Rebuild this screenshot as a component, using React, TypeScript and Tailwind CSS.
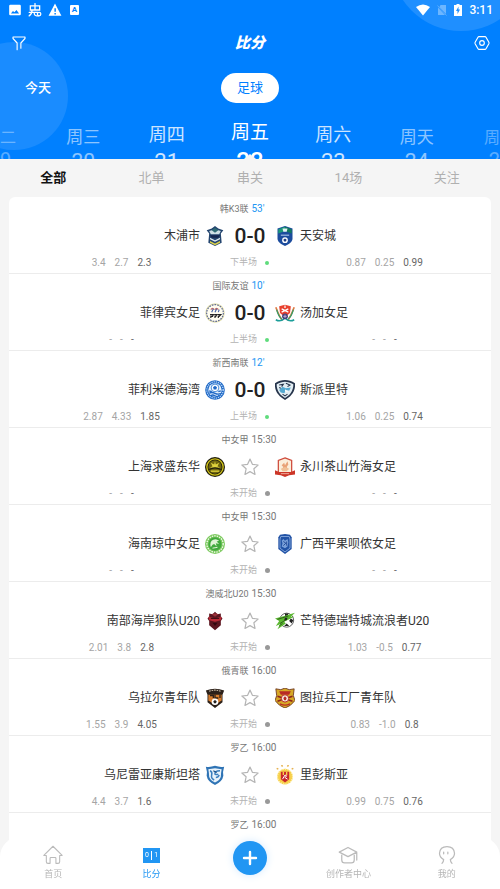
import type { ReactNode } from 'react';

type Match = {
  league: string;
  time: string;
  live?: string;
  home: string;
  away: string;
  homeLogo: ReactNode;
  awayLogo: ReactNode;
  homeOdds?: string[];
  awayOdds?: string[];
};

const shield = 'M12 1 L21 4 V13 C21 18 17 21 12 23 C7 21 3 18 3 13 V4 Z';

const MokpoLogo = (
  <>
    <path d="M12 0 L16 3 L22 5 L19 9 L20 20 L12 24 L4 20 L5 9 L2 5 L8 3 Z" fill="#24456f" />
    <path d="M5 6 L12 4 L19 6 L17 10 H7 Z" fill="#cfe0e6" />
    <path d="M8 5 L12 2 L16 5 L12 8 Z" fill="#2f6b74" />
    <path d="M6 11 H18 L16 14 H8 Z" fill="#15264f" />
    <path d="M6 14 L12 17 L18 14 V16 L12 19 L6 16 Z" fill="#dfe9ef" />
    <path d="M6 18 L12 21 L18 18 V20 L12 23 L6 20 Z" fill="#dbd04b" />
  </>
);

const CheonanLogo = (
  <>
    <path d="M12 0 L21 3 V15 C21 19 17 22 12 24 C7 22 3 19 3 15 V3 Z" fill="#1c4c9d" />
    <path d="M12 1 L4 4 V9 L12 6 Z" fill="#1b9a77" />
    <path d="M12 1 L20 4 V9 L12 6 Z" fill="#13795e" />
    <path d="M9 3 H15 L14 7 H10 Z" fill="#e3f3f4" />
    <path d="M7 11 H17" stroke="#b9d0f1" strokeWidth="1.2" />
    <circle cx="12" cy="17" r="3.4" fill="#fff" />
    <path d="M12 15 L14 16.5 L13 18.7 H11 L10 16.5 Z" fill="#1c3b80" />
  </>
);

const PhilippinesLogo = (
  <>
    <circle cx="12" cy="12" r="11" fill="#fffdf0" stroke="#e3dfae" strokeWidth="1.4" />
    <circle cx="12" cy="12" r="10" fill="none" stroke="#5a6592" strokeWidth="1.4" strokeDasharray="2 1.3" />
    <path d="M7 8 Q9 5 11 8 M12 8 Q14 5 16 8" stroke="#c46a69" strokeWidth="1.6" fill="none" />
    <path d="M8 11 L10 7 M12 11 L14 7 M16 11 L17 8" stroke="#4966a9" strokeWidth="1.4" />
    <path d="M6 14 H10 L9 16 H7 V18 M11 14 H14 L13 16 H12 V18 M15 14 H19 L17 16 H16 V18" stroke="#222" strokeWidth="1.4" fill="none" />
  </>
);

const TongaLogo = (
  <>
    <path d="M1 5 Q5 16 9 21 M23 5 Q19 16 15 21" stroke="#e17a42" strokeWidth="2" fill="none" />
    <path d="M2 8 Q4 16 8 19 M22 8 Q20 16 16 19" stroke="#2f9e6a" strokeWidth="1.5" fill="none" />
    <path d="M1 20 Q6 23 11 19 M23 20 Q18 23 13 19" stroke="#1b9e9a" strokeWidth="2" fill="none" />
    <path d="M5 4 L12 2 L19 4 L18 12 L12 17 L6 12 Z" fill="#e8412f" />
    <path d="M8 7 L16 11 M16 7 L8 11 M12 3 V6" stroke="#fff" strokeWidth="1.5" fill="none" />
    <circle cx="12" cy="16" r="3.5" fill="#42427b" />
    <path d="M10 16 H14 M12 14 V18" stroke="#d1b9da" strokeWidth="1" />
  </>
);

const FelipeLogo = (
  <>
    <circle cx="12" cy="12" r="11.8" fill="#1f68c6" />
    <circle cx="12" cy="12" r="9.8" fill="none" stroke="#b9d9f8" strokeWidth="1.6" strokeDasharray="1.4 1.2" />
    <circle cx="12" cy="12" r="8" fill="#e6f1fc" />
    <circle cx="12" cy="9.5" r="4.6" fill="#fff" stroke="#2a78d3" strokeWidth="1" />
    <path d="M12 7 L14.4 8.800 L13.5 11.4 H10.5 L9.6 8.800 Z" fill="#1f68c6" />
    <path d="M5 13 L8 14 M19 13 L16 14 M5 16 Q8 14 12 16 T19 16 M7 19 Q9 17 12 19 T17 18" stroke="#1f68c6" strokeWidth="1.5" fill="none" />
  </>
);

const SpiritLogo = (
  <>
    <path d="M12 0 C16 0 20 1 24 4 C25 14 19 20 12 24 C5 20 -1 14 0 4 C4 1 8 0 12 0 Z" fill="#26344b" />
    <path d="M12 2 C15 2 19 3 22 5 C22 13 18 18 12 21.5 C6 18 2 13 2 5 C5 3 9 2 12 2 Z" fill="#e2edf3" />
    <path d="M5 12 L9 8 L13 10 L19 9 L17 13 L14 12 L11 16 L7 15 Z" fill="#54a8d0" />
    <path d="M5 6 L10 5 L8 8 M13 4 L18 6 L15 8 M9 17 L12 19 L15 17 M5 9 L7 10" stroke="#26344b" strokeWidth="1.3" fill="none" />
    <path d="M12 11 L16 14 L12 14 Z" fill="#fff" />
  </>
);

const ShanghaiLogo = (
  <>
    <circle cx="12" cy="12" r="12" fill="#1f1d0c" />
    <circle cx="12" cy="12" r="9.8" fill="none" stroke="#d0c218" strokeWidth="1.6" />
    <circle cx="12" cy="12" r="8" fill="#6f6610" />
    <path d="M12 5 L13 9 L17 7 L15 11 L18 13 H6 L9 11 L7 7 L11 9 Z" fill="#e0d33d" />
    <path d="M5 15 Q12 11 19 15" stroke="#1f1d0c" strokeWidth="1.5" fill="none" />
    <path d="M7 17 H17" stroke="#e0d33d" strokeWidth="1.6" />
  </>
);

const YongchuanLogo = (
  <>
    <path d="M12 1 L20 4 V19 H4 V4 Z" fill="#fbeeda" stroke="#cf4b3c" strokeWidth="1.5" />
    <path d="M8 10 L11 7 L12 10 L15 5 L16 9 L14 12 L16 15 H8 L10 12 Z" fill="#e9a276" />
    <path d="M7 14 L12 12 L17 14 L14 17 H9 Z" fill="#f0c096" />
    <path d="M0 16 L5 18 H19 L24 16 V21 L17 22 L12 24 L7 22 L0 21 Z" fill="#cc3527" />
    <path d="M7 20 H17" stroke="#f3c1b3" strokeWidth="1" />
  </>
);

const HainanLogo = (
  <>
    <circle cx="12" cy="12" r="12" fill="#7fcb62" />
    <circle cx="12" cy="12" r="9.8" fill="none" stroke="#fff" strokeWidth="1.4" strokeDasharray="1.6 1.4" />
    <circle cx="12" cy="12" r="8" fill="#41a93d" />
    <path d="M7 16 Q5 9 10 7 Q13 5 17 8 L14 9 L17 12 L13 11 L14 15 L11 12 L9 13 Z" fill="#dff3d5" />
    <path d="M9 10 L12 8 M9 17 L15 16" stroke="#dff3d5" strokeWidth="1.2" />
  </>
);

const GuangxiLogo = (
  <>
    <path d="M6 1 L12 0 L18 1 L20 4 V18 L12 24 L4 18 V4 Z" fill="#2152a5" />
    <path d="M7 3 H17 L18 6 V17 L12 21.5 L6 17 V6 Z" fill="none" stroke="#8eafe0" strokeWidth="1" />
    <path d="M8 8 L10 6 L12 8 L15 6 L16 10 L15 15 L12 17 L8 15 L9 11 Z" fill="#7aa0d9" />
    <path d="M10 9 L13 11 L10 14 M14 9 V14" stroke="#173f8b" strokeWidth="1" fill="none" />
  </>
);

const SouthCoastLogo = (
  <>
    <path d="M12 1 L15 4 L19 3 V7 L21 9 L19 12 V17 L12 23 L5 17 V12 L3 9 L5 7 V3 L9 4 Z" fill="#5b1620" />
    <path d="M4 7 L12 9 L20 7 L19 11 L12 13 L5 11 Z" fill="#bb2a36" />
    <path d="M8 4 L12 7 L16 4 L14 3 H10 Z" fill="#9a2f38" />
    <path d="M9 14 L12 18 L15 14 Z" fill="#32080f" />
    <path d="M7 9 H17" stroke="#2a070c" strokeWidth="1" />
  </>
);

const MontLogo = (
  <>
    <circle cx="14" cy="11" r="8.4" fill="#fff" stroke="#444" strokeWidth="1" />
    <path d="M12 3 H16 L15 6 H12 Z M19 9 L22 11 L20 15 L17 12 Z M11 18 L14 15 L17 18 Z" fill="#222" />
    <path d="M0 9 L11 6 L24 2 L19 7 L23 7 L11 13 L13 15 L3 22 L6 16 L1 18 L5 12 Z" fill="#5cb832" />
    <path d="M3 10 L16 6 M6 15 L14 10 M5 18 L9 15" stroke="#2b5c16" strokeWidth="1.1" />
    <path d="M12 8 L15 8 L14 11 L11 11 Z" fill="#222" />
  </>
);

const UralLogo = (
  <>
    <path d="M1 3 Q12 -1 23 3 L21 8 V17 L12 24 L3 17 V8 Z" fill="#2b2019" />
    <path d="M4 8 H20 V15 L12 20 L4 15 Z" fill="#d67d2d" />
    <path d="M5 4 Q12 1 19 4" stroke="#c8b8a4" strokeWidth="1.3" fill="none" strokeDasharray="2 1" />
    <path d="M6 9 H10 V12 M12 8 V12 H16 M18 8 V12" stroke="#2b2019" strokeWidth="1.6" fill="none" />
    <circle cx="12" cy="16.5" r="4" fill="#fff" />
    <path d="M12 14.4 L14 16 L13.2 18.4 H10.8 L10 16 Z" fill="#222" />
  </>
);

const ArsenalTulaLogo = (
  <>
    <path d="M1 1 L7 2 L12 0 L17 2 L23 1 L22 9 L24 15 Q19 22 12 24 Q5 22 0 15 L2 9 Z" fill="#d6a826" stroke="#68301e" strokeWidth="1" />
    <path d="M5 4 H19 L17 8 H7 Z" fill="#b82a23" />
    <path d="M3 10 L21 16 M21 10 L3 16" stroke="#8c231d" strokeWidth="2" />
    <circle cx="12" cy="12.5" r="4.4" fill="#f5ece1" stroke="#b82a23" strokeWidth="1.2" />
    <path d="M12 10 L14 12 L13 14.6 H11 L10 12 Z" fill="#b82a23" />
    <path d="M6 19 Q12 22 18 19" stroke="#b82a23" strokeWidth="1.6" fill="none" />
  </>
);

const UnireaLogo = (
  <>
    <path d="M1 2 Q6 3 12 1 Q18 3 23 2 Q21 8 22 13 Q21 20 12 24 Q3 20 2 13 Q3 8 1 2 Z" fill="#2f74b5" />
    <path d="M4 5 Q8 5 12 4 Q16 5 20 5 Q19 10 19 14 Q18 18 12 21 Q6 18 5 14 Q5 10 4 5 Z" fill="#e9f3fb" />
    <path d="M6 7 Q9 8 8 12 Q7 16 11 18 M18 7 Q11 7 12 11 Q14 12 16 11 M13 15 Q16 15 17 12" stroke="#3a7fbf" strokeWidth="1.8" fill="none" />
    <path d="M10 7 L14 9" stroke="#16497e" strokeWidth="1.4" />
  </>
);

const RipensiaLogo = (
  <>
    <path d="M2 4 L4 5 M8 0 L9 2 M16 0 L15 2 M22 4 L20 5" stroke="#e6b14e" strokeWidth="1.8" />
    <circle cx="12" cy="14" r="9.4" fill="#f7d04b" />
    <circle cx="12" cy="14" r="9" fill="none" stroke="#fff1b5" strokeWidth="1.4" strokeDasharray="1.6 1.4" />
    <path d="M7 8 H17 V17 L12 21 L7 17 Z" fill="#c9272b" />
    <path d="M10 8 V12 M14 8 V12" stroke="#f7d04b" strokeWidth="1.6" />
    <path d="M9 17 L12 12 L14 13 L12 15 L15 17" stroke="#fff" strokeWidth="1.2" fill="none" />
  </>
);

const matches: Match[] = [
  { league: '韩K3联', time: "53'", live: '下半场', home: '木浦市', away: '天安城', homeLogo: MokpoLogo, awayLogo: CheonanLogo, homeOdds: ['3.4', '2.7', '2.3'], awayOdds: ['0.87', '0.25', '0.99'] },
  { league: '国际友谊', time: "10'", live: '上半场', home: '菲律宾女足', away: '汤加女足', homeLogo: PhilippinesLogo, awayLogo: TongaLogo },
  { league: '新西南联', time: "12'", live: '上半场', home: '菲利米德海湾', away: '斯派里特', homeLogo: FelipeLogo, awayLogo: SpiritLogo, homeOdds: ['2.87', '4.33', '1.85'], awayOdds: ['1.06', '0.25', '0.74'] },
  { league: '中女甲', time: '15:30', home: '上海求盛东华', away: '永川茶山竹海女足', homeLogo: ShanghaiLogo, awayLogo: YongchuanLogo },
  { league: '中女甲', time: '15:30', home: '海南琼中女足', away: '广西平果呗侬女足', homeLogo: HainanLogo, awayLogo: GuangxiLogo },
  { league: '澳威北U20', time: '15:30', home: '南部海岸狼队U20', away: '芒特德瑞特城流浪者U20', homeLogo: SouthCoastLogo, awayLogo: MontLogo, homeOdds: ['2.01', '3.8', '2.8'], awayOdds: ['1.03', '-0.5', '0.77'] },
  { league: '俄青联', time: '16:00', home: '乌拉尔青年队', away: '图拉兵工厂青年队', homeLogo: UralLogo, awayLogo: ArsenalTulaLogo, homeOdds: ['1.55', '3.9', '4.05'], awayOdds: ['0.83', '-1.0', '0.8'] },
  { league: '罗乙', time: '16:00', home: '乌尼雷亚康斯坦塔', away: '里彭斯亚', homeLogo: UnireaLogo, awayLogo: RipensiaLogo, homeOdds: ['4.4', '3.7', '1.6'], awayOdds: ['0.99', '0.75', '0.76'] },
  { league: '罗乙', time: '16:00', home: '', away: '', homeLogo: <path d={shield} fill="#c9272b" />, awayLogo: <path d={shield} fill="#2f74b5" /> },
];

// items shrink and fade towards both ends of the wheel
const days = [
  { name: '周二', date: '19', style: 'opacity-35 text-base pt-[5px]', dateStyle: 'text-xl leading-[18px]' },
  { name: '周三', date: '20', style: 'opacity-55 text-[17px] pt-1', dateStyle: 'text-[21px] leading-[22px]' },
  { name: '周四', date: '21', style: 'opacity-80 text-lg pt-[2px]', dateStyle: 'text-[22px] leading-7' },
  { name: '周五', date: '22', style: 'text-[19px]', dateStyle: 'text-2xl leading-[30px] font-medium' },
  { name: '周六', date: '23', style: 'opacity-80 text-lg pt-[2px]', dateStyle: 'text-[22px] leading-7' },
  { name: '周天', date: '24', style: 'opacity-55 text-[17px] pt-1', dateStyle: 'text-[21px] leading-[22px]' },
  { name: '周一', date: '25', style: 'opacity-35 text-base pt-[5px]', dateStyle: 'text-xl leading-[18px]' },
];

const tabs = ['全部', '北单', '串关', '14场', '关注'];

function Crest({ children }: { children: ReactNode }) {
  return (
    <svg className="w-5 h-5 shrink-0" viewBox="0 0 24 24" aria-hidden="true">
      {children}
    </svg>
  );
}

function Odds({ values, className }: { values?: string[]; className: string }) {
  const items = values ?? ['-', '-', '-'];
  return (
    <div className={`flex justify-center text-[10px] text-[#a5a5a5] ${values ? 'gap-[9px]' : 'gap-2'} ${className}`}>
      {items.map((v, i) => (
        <span key={i} className={i === 2 ? 'text-[#666]' : ''}>{v}</span>
      ))}
    </div>
  );
}

function MatchRow({ match }: { match: Match }) {
  return (
    <li className="h-[77px] shrink-0 border-b border-[#ececec] pt-[3px]">
      <div className="grid grid-cols-2 items-baseline gap-[3px] h-[17px] leading-[17px] text-[9px] text-[#777]">
        <span className="text-right">{match.league}</span>
        <span className={`text-[10px] ${match.live ? 'text-[#2196f3]' : ''}`}>{match.time}</span>
      </div>

      <div className="grid grid-cols-[1fr_50px_1fr] items-center h-[38px] text-xs text-[#333] whitespace-nowrap">
        <div className="flex items-center justify-end gap-[5px]">
          <span>{match.home}</span>
          <Crest>{match.homeLogo}</Crest>
        </div>
        {match.live ? (
          <span className="text-center text-[21px] font-medium text-[#222]">0-0</span>
        ) : (
          <button type="button" aria-label="关注" className="flex justify-center">
            <svg className="w-[18px] h-[18px]" viewBox="0 0 24 24" fill="none" stroke="#b5b5b5" strokeWidth="1.6" strokeLinejoin="round">
              <path d="M12 1.5 L15.2 8.4 L22.8 9.3 L17.2 14.4 L18.7 21.9 L12 18.2 L5.3 21.9 L6.8 14.4 L1.2 9.3 L8.8 8.4 Z" />
            </svg>
          </button>
        )}
        <div className="flex items-center gap-[5px]">
          <Crest>{match.awayLogo}</Crest>
          <span>{match.away}</span>
        </div>
      </div>

      <div className="grid grid-cols-[1fr_40px_1fr] items-center h-[14px]">
        <Odds values={match.homeOdds} className="pl-1" />
        <div className="flex items-center justify-between text-[9px] text-[#b3b3b3]">
          <span>{match.live ?? '未开始'}</span>
          <span className="flex justify-center w-[6px]">
            <span className={match.live ? 'w-1 h-1 rounded-full bg-[#5fdc7c]' : 'w-[5px] h-[5px] rounded-full bg-[#999]'} />
          </span>
        </div>
        <Odds values={match.awayOdds} className="pl-2" />
      </div>
    </li>
  );
}

function StatusBar() {
  return (
    <div className="flex items-center justify-between h-5 pl-2 pr-[7px]">
      <div className="flex items-center gap-[6px]">
        <svg className="w-[14px] h-[14px]" viewBox="0 0 24 24" fill="#fff">
          <path fillRule="evenodd" d="M4 3 H20 Q22 3 22 5 V19 Q22 21 20 21 H4 Q2 21 2 19 V5 Q2 3 4 3 Z M5 18 H19 L14.5 12 L11 16 L8.5 13.5 Z" />
        </svg>
        <svg className="w-[14px] h-[14px]" viewBox="0 0 24 24" fill="none" stroke="#fff" strokeWidth="2.2" strokeLinecap="round">
          <path d="M4 5 H20 V12 H4 Z M12 1 V12 M2 16 H17 M7 12 Q7 19 2 22 M11 16 Q10 22 15 22 H18" />
          <circle cx="19" cy="19" r="3" />
        </svg>
        <svg className="w-[14px] h-[14px]" viewBox="0 0 24 24" fill="#fff">
          <path fillRule="evenodd" d="M12 1 L23 22 H1 Z M11 9 V15 H13.5 V9 Z M11 17 V19.5 H13.5 V17 Z" />
        </svg>
        <span className="flex items-center justify-center w-[9px] h-[10px] ml-[2px] rounded-[1px] bg-white text-[8px] font-bold text-[#0080ff]">A</span>
      </div>
      <div className="flex items-center gap-[7px] text-white">
        <svg className="w-[14px] h-3" viewBox="0 0 28 24" fill="#fff">
          <path d="M14 23 L0 6 Q14 -4 28 6 Z" />
        </svg>
        <svg className="w-[10px] h-3 opacity-35" viewBox="0 0 20 24" fill="#fff">
          <path d="M7 2 H18 V20 L5 6 Z M2 7 L16 22 H2 Z" />
          <path d="M1 3 L19 23" stroke="#fff" strokeWidth="1.5" />
        </svg>
        <svg className="w-2 h-3" viewBox="0 0 16 24" fill="#fff">
          <path fillRule="evenodd" d="M5 0 H11 V2 H16 V24 H0 V2 H5 Z M9 5 L4 14 H7 V20 L12 11 H9 Z" />
        </svg>
        <span className="text-xs font-medium">3:11</span>
      </div>
    </div>
  );
}

function Header() {
  return (
    <header className="relative h-[159px] shrink-0 overflow-hidden bg-[#0080ff] text-white">
      <div className="absolute -left-10 top-[42px] w-[108px] h-[108px] rounded-full bg-[#1a8cff]" />
      <div className="absolute right-[-31px] -top-[109px] w-[140px] h-[140px] rounded-full bg-[#1f8fff]" />

      <div className="relative">
        <StatusBar />

        <div className="flex items-center justify-between h-[46px] px-[10px]">
          <button type="button" aria-label="筛选" className="w-5">
            <svg className="w-[18px] h-[18px]" viewBox="0 0 24 24" fill="none" stroke="#fff" strokeWidth="1.5" strokeLinejoin="round" strokeLinecap="round">
              <path d="M4 4 H20 V6 L14.5 12 V17 M4 4 V6 L9.5 12 V21 M14.5 17 V19" />
            </svg>
          </button>
          <h1 className="text-[15px] font-black italic">比分</h1>
          <button type="button" aria-label="设置" className="w-5 flex justify-end">
            <svg className="w-4 h-4" viewBox="0 0 24 24" fill="none" stroke="#fff" strokeWidth="1.7" strokeLinejoin="round">
              <path d="M7.5 2.5 H16.5 Q17.5 2.5 18 3.4 L22.3 11 Q22.8 12 22.3 13 L18 20.6 Q17.5 21.5 16.5 21.5 H7.5 Q6.5 21.5 6 20.6 L1.7 13 Q1.2 12 1.7 11 L6 3.4 Q6.5 2.5 7.5 2.5 Z" />
              <circle cx="12" cy="12" r="3.5" />
            </svg>
          </button>
        </div>

        <div className="grid grid-cols-3 items-center h-11 px-[25px]">
          <button type="button" className="justify-self-start text-[13px] font-medium">今天</button>
          <button type="button" className="justify-self-center h-[30px] px-4 rounded-full bg-white text-[13px] text-[#0080ff]">足球</button>
        </div>

        <div className="flex items-start justify-center pt-[10px]">
          {days.map((day) => (
            <button type="button" key={day.date} className={`w-1/6 shrink-0 flex flex-col items-center leading-[26px] ${day.style}`}>
              <span>{day.name}</span>
              <span className={day.dateStyle}>{day.date}</span>
            </button>
          ))}
        </div>
      </div>

      <svg className="absolute bottom-0 left-1/2 -translate-x-1/2 w-3 h-[5px]" viewBox="0 0 12 5" fill="#f5f5f5">
        <path d="M0 5 L6 0 L12 5 Z" />
      </svg>
    </header>
  );
}

function BottomNav() {
  const item = 'flex flex-col items-center gap-[3px] text-[9px]';
  return (
    <nav className="fixed inset-x-0 bottom-0 grid grid-cols-5 h-[52px] px-1 pt-2 rounded-t-[20px] bg-white">
      <a href="#home" className={`${item} text-[#b5b5b5]`}>
        <svg className="w-5 h-5" viewBox="0 0 24 24" fill="none" stroke="#bbb" strokeWidth="1.3" strokeLinejoin="round">
          <path d="M12 1.5 L23 12.5 H20 V20 Q20 22 18 22 H15.5 V16 Q15.5 15 14.5 15 H9.5 Q8.500 15 8.500 16 V22 H6 Q4 22 4 20 V12.5 H1 Z" />
        </svg>
        首页
      </a>
      <a href="#score" className={`${item} text-[#2196f3]`}>
        <span className="flex items-center h-5">
          <span className="flex items-center justify-between w-[17px] h-[15px] px-[2px] bg-[#2196f3] text-[7px] text-white">
            <span>0</span>
            <span className="w-px h-[9px] bg-white" />
            <span>1</span>
          </span>
        </span>
        比分
      </a>
      <button type="button" aria-label="发布" className="justify-self-center -mt-1 flex items-center justify-center w-[34px] h-[34px] rounded-full bg-[#2196f3] shadow-[0_0_8px_#d5eaff]">
        <svg className="w-4 h-4" viewBox="0 0 16 16" stroke="#fff" strokeWidth="2.4" strokeLinecap="round">
          <path d="M8 2 V14 M2 8 H14" />
        </svg>
      </button>
      <a href="#creator" className={`${item} text-[#b5b5b5]`}>
        <svg className="w-5 h-5" viewBox="0 0 24 24" fill="none" stroke="#bbb" strokeWidth="1.5" strokeLinejoin="round" strokeLinecap="round">
          <path d="M12 3 L22.500 8.500 L12 14 L1.500 8.500 Z M4.500 12 V18 Q4.500 21.500 8 21.500 H16 Q19.500 21.500 19.500 18 V12 M22.500 9 V18" />
        </svg>
        创作者中心
      </a>
      <a href="#me" className={`${item} text-[#b5b5b5]`}>
        <svg className="w-5 h-5" viewBox="0 0 24 24" fill="none" stroke="#bbb" strokeWidth="1.5" strokeLinecap="round">
          <path d="M6 22 Q8 20 8 17.500 Q3 15 3 10 Q3.500 2 12 2 Q20.500 2 21 10 Q21 15 16 17.500 Q16 20 18 22" />
          <path d="M8 8.500 V10.500 M13 8.500 V10.500" />
        </svg>
        我的
      </a>
    </nav>
  );
}

export default function App() {
  return (
    <div className="h-screen flex flex-col overflow-hidden bg-[#f5f5f5] font-[Roboto,'Noto_Sans_CJK_SC',sans-serif]">
      <Header />

      <div className="grid grid-cols-5 shrink-0 h-[38px] px-1 text-[13px] text-[#b0b0b0]">
        {tabs.map((tab, i) => (
          <button type="button" key={tab} className={i === 0 ? 'font-bold text-[#111]' : ''}>{tab}</button>
        ))}
      </div>

      <ul className="flex-1 flex flex-col mx-[9px] overflow-hidden rounded-t-md bg-white">
        {matches.map((match, i) => (
          <MatchRow key={i} match={match} />
        ))}
      </ul>

      <BottomNav />
    </div>
  );
}
